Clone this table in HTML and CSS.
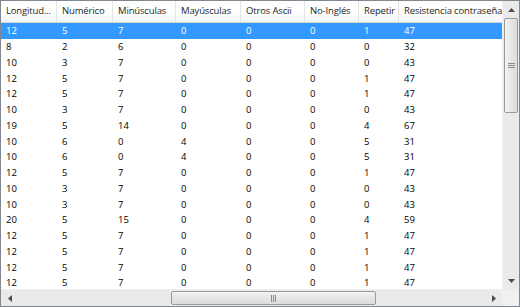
FILE: index.html
```html
<!DOCTYPE html>
<html>
<head>
<meta charset="utf-8">
<link rel="stylesheet" href="styles.css">
</head>
<body>
<div class="frame">
  <div class="viewport">
    <div class="grid">
      <div class="row head">
        <div class="c c1">Longitud...</div><div class="c c2">Numérico</div><div class="c c3">Minúsculas</div><div class="c c4">Mayúsculas</div><div class="c c5">Otros Ascii</div><div class="c c6">No-Inglés</div><div class="c c7">Repetir</div><div class="c c8">Resistencia contraseña</div>
      </div>
      <div class="row sel"><div class="c c1">12</div><div class="c c2">5</div><div class="c c3">7</div><div class="c c4">0</div><div class="c c5">0</div><div class="c c6">0</div><div class="c c7">1</div><div class="c c8">47</div></div>
      <div class="row"><div class="c c1">8</div><div class="c c2">2</div><div class="c c3">6</div><div class="c c4">0</div><div class="c c5">0</div><div class="c c6">0</div><div class="c c7">0</div><div class="c c8">32</div></div>
      <div class="row"><div class="c c1">10</div><div class="c c2">3</div><div class="c c3">7</div><div class="c c4">0</div><div class="c c5">0</div><div class="c c6">0</div><div class="c c7">0</div><div class="c c8">43</div></div>
      <div class="row"><div class="c c1">12</div><div class="c c2">5</div><div class="c c3">7</div><div class="c c4">0</div><div class="c c5">0</div><div class="c c6">0</div><div class="c c7">1</div><div class="c c8">47</div></div>
      <div class="row"><div class="c c1">12</div><div class="c c2">5</div><div class="c c3">7</div><div class="c c4">0</div><div class="c c5">0</div><div class="c c6">0</div><div class="c c7">1</div><div class="c c8">47</div></div>
      <div class="row"><div class="c c1">10</div><div class="c c2">3</div><div class="c c3">7</div><div class="c c4">0</div><div class="c c5">0</div><div class="c c6">0</div><div class="c c7">0</div><div class="c c8">43</div></div>
      <div class="row"><div class="c c1">19</div><div class="c c2">5</div><div class="c c3">14</div><div class="c c4">0</div><div class="c c5">0</div><div class="c c6">0</div><div class="c c7">4</div><div class="c c8">67</div></div>
      <div class="row"><div class="c c1">10</div><div class="c c2">6</div><div class="c c3">0</div><div class="c c4">4</div><div class="c c5">0</div><div class="c c6">0</div><div class="c c7">5</div><div class="c c8">31</div></div>
      <div class="row"><div class="c c1">10</div><div class="c c2">6</div><div class="c c3">0</div><div class="c c4">4</div><div class="c c5">0</div><div class="c c6">0</div><div class="c c7">5</div><div class="c c8">31</div></div>
      <div class="row"><div class="c c1">12</div><div class="c c2">5</div><div class="c c3">7</div><div class="c c4">0</div><div class="c c5">0</div><div class="c c6">0</div><div class="c c7">1</div><div class="c c8">47</div></div>
      <div class="row"><div class="c c1">10</div><div class="c c2">3</div><div class="c c3">7</div><div class="c c4">0</div><div class="c c5">0</div><div class="c c6">0</div><div class="c c7">0</div><div class="c c8">43</div></div>
      <div class="row"><div class="c c1">10</div><div class="c c2">3</div><div class="c c3">7</div><div class="c c4">0</div><div class="c c5">0</div><div class="c c6">0</div><div class="c c7">0</div><div class="c c8">43</div></div>
      <div class="row"><div class="c c1">20</div><div class="c c2">5</div><div class="c c3">15</div><div class="c c4">0</div><div class="c c5">0</div><div class="c c6">0</div><div class="c c7">4</div><div class="c c8">59</div></div>
      <div class="row"><div class="c c1">12</div><div class="c c2">5</div><div class="c c3">7</div><div class="c c4">0</div><div class="c c5">0</div><div class="c c6">0</div><div class="c c7">1</div><div class="c c8">47</div></div>
      <div class="row"><div class="c c1">12</div><div class="c c2">5</div><div class="c c3">7</div><div class="c c4">0</div><div class="c c5">0</div><div class="c c6">0</div><div class="c c7">1</div><div class="c c8">47</div></div>
      <div class="row"><div class="c c1">12</div><div class="c c2">5</div><div class="c c3">7</div><div class="c c4">0</div><div class="c c5">0</div><div class="c c6">0</div><div class="c c7">1</div><div class="c c8">47</div></div>
      <div class="row"><div class="c c1">12</div><div class="c c2">5</div><div class="c c3">7</div><div class="c c4">0</div><div class="c c5">0</div><div class="c c6">0</div><div class="c c7">1</div><div class="c c8">47</div></div>
    </div>
  </div>
  <div class="vscroll">
    <div class="arrow"><svg width="7" height="4" viewBox="0 0 7 4"><path d="M0 4L3.5 0L7 4Z" fill="#4d4d4d"/></svg></div>
    <div class="vthumb"><span class="grip-h"></span></div>
    <div class="vtrack"></div>
    <div class="arrow"><svg width="7" height="4" viewBox="0 0 7 4"><path d="M0 0L3.5 4L7 0Z" fill="#4d4d4d"/></svg></div>
  </div>
  <div class="hscroll">
    <div class="harrow"><svg width="4" height="7" viewBox="0 0 4 7"><path d="M4 0L0 3.5L4 7Z" fill="#4d4d4d"/></svg></div>
    <div class="htrack left"></div>
    <div class="hthumb"><span class="grip-v"></span></div>
    <div class="htrack"></div>
    <div class="harrow"><svg width="4" height="7" viewBox="0 0 4 7"><path d="M0 0L4 3.5L0 7Z" fill="#4d4d4d"/></svg></div>
  </div>
  <div class="corner"></div>
</div>
</body>
</html>
```
FILE: styles.css
```css
html, body { margin: 0; padding: 0; background: #fff; }
body {
  font-family: "Open Sans", "Noto Sans", "DejaVu Sans", sans-serif;
  font-size: 9.5px;
  color: #000;
}
.frame {
  width: 520px;
  height: 307px;
  box-sizing: border-box;
  border: 1px solid #828790;
  display: grid;
  grid-template-columns: 1fr 17px;
  grid-template-rows: 1fr 17px;
  overflow: hidden;
}
.viewport { overflow: hidden; background: #fff; }
.grid { display: flex; flex-direction: column; width: 560px; }
.row { display: flex; height: 15.75px; align-items: center; }
.row.head {
  height: 21px;
  background: linear-gradient(#ffffff, #ffffff 55%, #f4f5f7);
  border-bottom: 1px solid #d5d5d5;
  color: #1e1e1e;
  letter-spacing: -0.15px;
}
.row.sel { background: #3399ff; color: #fff; }
.c { box-sizing: border-box; padding-left: 5px; white-space: nowrap; overflow: hidden; }
.head .c { border-right: 1px solid #e3e4e6; height: 21px; line-height: 20px; }
.c1 { width: 56px; }
.c2 { width: 56px; }
.c3 { width: 63px; }
.c4 { width: 65px; }
.c5 { width: 64px; }
.c6 { width: 54px; }
.c7 { width: 40px; }
.c8 { width: 150px; }
.vscroll {
  display: flex; flex-direction: column;
  background: #eaeaea;
  border-left: 1px solid #f0f0f0;
}
.arrow { height: 17px; display: flex; align-items: center; justify-content: center; flex: none; }
.vthumb {
  height: 95px; margin: 0 1px; flex: none;
  border: 1px solid #9a9a9a; border-radius: 2px; box-sizing: border-box;
  background: linear-gradient(90deg, #f3f3f3, #e6e6e6 50%, #dcdcdc);
  display: flex; align-items: center; justify-content: center;
}
.grip-h { width: 7px; height: 5px; background: repeating-linear-gradient(#8b8b8b 0 1px, transparent 1px 2px); }
.vtrack { flex: 1; }
.hscroll {
  display: flex; background: #eaeaea;
  border-top: 1px solid #f0f0f0;
}
.harrow { width: 17px; display: flex; align-items: center; justify-content: center; flex: none; }
.htrack { flex: 1; }
.htrack.left { flex: none; width: 153px; }
.hthumb {
  width: 205px; margin: 1px 0; flex: none;
  border: 1px solid #9a9a9a; border-radius: 2px; box-sizing: border-box;
  background: linear-gradient(#f3f3f3, #e6e6e6 50%, #dcdcdc);
  display: flex; align-items: center; justify-content: center;
}
.grip-v { width: 5px; height: 7px; background: repeating-linear-gradient(90deg, #8b8b8b 0 1px, transparent 1px 2px); }
.corner { background: #f0f0f0; }
```
